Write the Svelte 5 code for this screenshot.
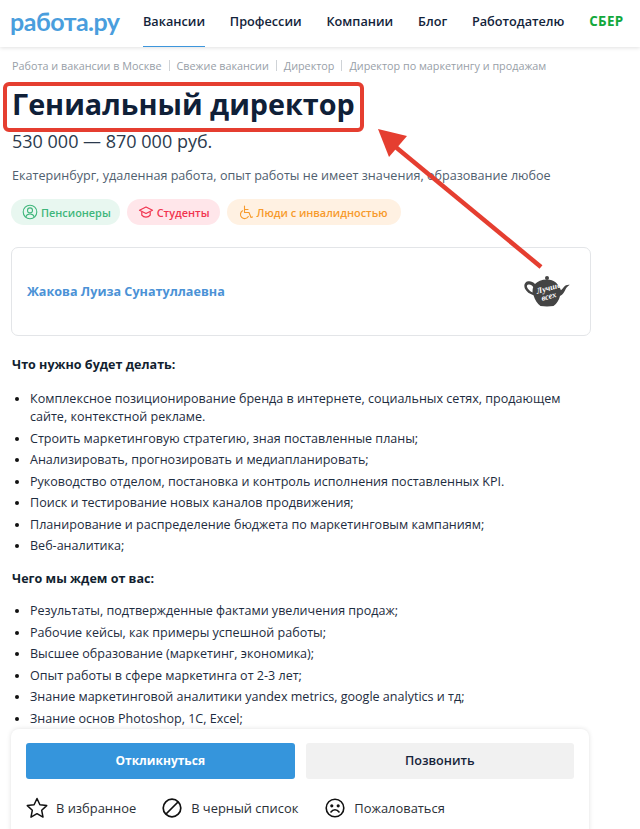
<script>
  const crumbs = ['Работа и вакансии в Москве', 'Свежие вакансии', 'Директор', 'Директор по маркетингу и продажам'];
  const duties = [
    'Комплексное позиционирование бренда в интернете, социальных сетях, продающем сайте, контекстной рекламе.',
    'Строить маркетинговую стратегию, зная поставленные планы;',
    'Анализировать, прогнозировать и медиапланировать;',
    'Руководство отделом, постановка и контроль исполнения поставленных KPI.',
    'Поиск и тестирование новых каналов продвижения;',
    'Планирование и распределение бюджета по маркетинговым кампаниям;',
    'Веб-аналитика;'
  ];
  const reqs = [
    'Результаты, подтвержденные фактами увеличения продаж;',
    'Рабочие кейсы, как примеры успешной работы;',
    'Высшее образование (маркетинг, экономика);',
    'Опыт работы в сфере маркетинга от 2-3 лет;',
    'Знание маркетинговой аналитики yandex metrics, google analytics и тд;',
    'Знание основ Photoshop, 1С, Excel;'
  ];
</script>

<div class="page">
  <header class="top">
    <span class="logo">работа.ру</span>
    <nav class="nav">
      <a class="active">Вакансии</a>
      <a>Профессии</a>
      <a>Компании</a>
      <a>Блог</a>
      <a>Работодателю</a>
      <a class="sber">СБЕР</a>
    </nav>
  </header>

  <main class="content">
    <div class="crumbs">
      {#each crumbs as c, i}
        {#if i > 0}<i class="sep"></i>{/if}<span>{c}</span>
      {/each}
    </div>
    <h1>Гениальный директор</h1>
    <div class="salary">530 000 — 870 000 руб.</div>
    <div class="meta">Екатеринбург, удаленная работа, опыт работы не имеет значения, образование любое</div>

    <div class="tags">
      <span class="tag green">
        <svg width="16" height="16" viewBox="0 0 16 16" fill="none" stroke="currentColor" stroke-width="1.1"><circle cx="8" cy="8" r="6.8"/><circle cx="8" cy="6.4" r="2.5"/><path d="M3.7 13c.6-2 2.3-3 4.3-3s3.700 1 4.300 3"/></svg>
        Пенсионеры
      </span>
      <span class="tag red">
        <svg width="16" height="16" viewBox="0 0 16 16" fill="none" stroke="currentColor" stroke-width="1.2" stroke-linejoin="round"><path d="M8 3 1.500 6.300 8 9.500l6.500-3.200z"/><path d="M3.800 8v3.200c1 1.300 2.500 2 4.200 2s3.200-.7 4.200-2V8"/></svg>
        Студенты
      </span>
      <span class="tag orange">
        <svg width="16" height="16" viewBox="0 0 16 16" fill="none" stroke="currentColor" stroke-width="1.1" stroke-linecap="round" stroke-linejoin="round"><path d="M6.500 2v6.500h4.500l2 5 1.500-.6"/><path d="M6.500 5.500h3.500"/><path d="M4.500 6.800A4.200 4.200 0 1 0 10.300 12.500"/></svg>
        Люди с инвалидностью
      </span>
    </div>

    <section class="company">
      <a class="company-name">Жакова Луиза Сунатуллаевна</a>
      <svg class="teapot" width="46" height="31" viewBox="0 0 46 31">
        <circle cx="23" cy="2" r="2" fill="#444"/>
        <path fill="#444" fill-rule="evenodd" d="M23 3.500c-5.500 0-9.500 1.800-12 4.500C9 5.800 6.500 4.800 4 5.300.5 6 -.5 9.500 1 12.800c1.500 3 4.500 5.200 8.500 6.400 1.300 4.600 3.800 8.500 7 10.800 4 .6 9 .6 13 0 3.500-2.500 5.500-6 6.500-10 3-1.500 4.500-4.500 5.700-7 .9-1.800 2.300-3.200 4-4.300-2.300-.3-4.500.5-5.800 2.300-1 1.300-1.800 2.400-3 3.200C35 8.200 30 3.500 23 3.500zM4.500 8.500c2-.3 3.700 1 4.700 2.500-.6 1.800-.8 3.700-.6 5.500C6 15.300 3.600 13 3 11c-.3-1.300.2-2.300 1.500-2.500z"/>
        <g fill="#fff" font-family="Liberation Serif, serif" font-style="italic" font-weight="700" font-size="8.500" transform="rotate(-16 24 16)">
          <text x="13" y="15">Лучше</text>
          <text x="16" y="23">всех</text>
        </g>
      </svg>
    </section>

    <div class="desc">
      <p class="head">Что нужно будет делать:</p>
      <ul>
        {#each duties as d}<li>{d}</li>{/each}
      </ul>
      <p class="head second">Чего мы ждем от вас:</p>
      <ul class="after-second">
        {#each reqs as r}<li>{r}</li>{/each}
      </ul>
    </div>
  </main>

  <aside class="panel">
    <div class="buttons">
      <button class="btn primary">Откликнуться</button>
      <button class="btn secondary">Позвонить</button>
    </div>
    <div class="actions">
      <span class="action fav">
        <svg width="24" height="24" viewBox="0 0 24 24" fill="none" stroke="#111" stroke-width="1.500" stroke-linejoin="round"><path d="M12 2.500l2.900 6.300 6.800.8-5 4.700 1.300 6.800-6-3.400-6 3.400 1.300-6.800-5-4.700 6.800-.8z"/></svg>
        В избранное
      </span>
      <span class="action block">
        <svg width="20" height="20" viewBox="0 0 20 20" fill="none" stroke="#111" stroke-width="1.700"><circle cx="10" cy="10" r="8.800"/><path d="M4 16 16 4"/></svg>
        В черный список
      </span>
      <span class="action">
        <svg width="20" height="20" viewBox="0 0 20 20" fill="none" stroke="#111" stroke-width="1.600" stroke-linecap="round"><circle cx="10" cy="10" r="8.800"/><circle cx="6.800" cy="7.800" r=".8" fill="#111"/><circle cx="13.200" cy="7.800" r=".8" fill="#111"/><path d="M6 14c1-1.500 2.400-2.200 4-2.200s3 .7 4 2.200"/></svg>
        Пожаловаться
      </span>
    </div>
  </aside>

  <div class="mark"></div>
  <svg class="arrow" width="640" height="829" viewBox="0 0 640 829">
    <path d="M541 267 392 144" stroke="#e53e30" stroke-width="4.500" fill="none"/>
    <path d="M378 129 407 136 389 157z" fill="#e53e30"/>
  </svg>
</div>

<style>
  :global(body) {
    margin: 0;
    background: #fff;
    overflow: hidden;
  }
  .page {
    position: relative;
    width: 640px;
    height: 829px;
    overflow: hidden;
    font-family: "Open Sans", sans-serif;
    color: #0f2038;
  }
  .top {
    display: flex;
    align-items: center;
    height: 47px;
    padding-left: 10px;
    box-sizing: border-box;
    box-shadow: 0 1px 4px rgba(0, 0, 0, 0.12);
  }
  .logo {
    width: 133px;
    flex: none;
    margin-top: -6px;
    font-family: Lato, sans-serif;
    font-weight: 700;
    font-size: 25px;
    line-height: 30px;
    letter-spacing: -0.5px;
    color: #4a9edd;
  }
  .nav {
    display: flex;
    gap: 24.800px;
    height: 100%;
  }
  .nav a {
    display: flex;
    align-items: center;
    height: 100%;
    box-sizing: border-box;
    padding-bottom: 5px;
    font-size: 12.700px;
    font-weight: 600;
    color: #12233a;
  }
  .nav a.active {
    border-bottom: 1px solid #3d96dc;
  }
  .nav a.sber {
    font-weight: 700;
    font-size: 13.400px;
    color: #12a83c;
    letter-spacing: 0.3px;
  }
  .content {
    padding: 0 12px;
  }
  .crumbs {
    display: flex;
    align-items: center;
    height: 16px;
    margin-top: 10px;
    font-size: 10.800px;
    color: #98a0a8;
    white-space: nowrap;
  }
  .sep {
    width: 1px;
    height: 11px;
    margin: 0 7px;
    background: #cfd3d7;
  }
  h1 {
    margin: 12px 0 0;
    font-size: 28.750px;
    line-height: 38px;
    font-weight: 700;
    color: #0f2038;
  }
  .salary {
    margin-top: 5px;
    font-size: 18px;
    line-height: 26px;
    color: #2b3a4d;
  }
  .meta {
    margin-top: 13px;
    font-size: 12.600px;
    line-height: 18px;
    color: #50606f;
    white-space: nowrap;
  }
  .tags {
    display: flex;
    gap: 7px;
    margin: 14px 0 0 -1px;
  }
  .tag {
    display: flex;
    align-items: center;
    gap: 3px;
    height: 26px;
    padding: 0 10px 0 11px;
    border-radius: 13px;
    font-size: 10.900px;
    font-weight: 600;
    white-space: nowrap;
  }
  .green { background: #e8f7f0; color: #3fb67b; padding-right: 9px; }
  .red { background: #ffe6ea; color: #f1344f; }
  .orange { background: #fff1e2; color: #f79a2b; padding-right: 14px; }
  .company {
    display: flex;
    align-items: center;
    justify-content: space-between;
    width: 580px;
    height: 89px;
    box-sizing: border-box;
    margin: 22px 0 0 -1px;
    padding: 0 20px 0 15px;
    border: 1px solid #e3e5e8;
    border-radius: 7px;
  }
  .company-name {
    font-size: 12.600px;
    font-weight: 700;
    color: #4b92d6;
  }
  .teapot {
    margin-top: -1px;
  }
  .desc {
    margin-top: 20px;
    width: 570px;
    font-size: 12.550px;
    line-height: 18px;
    color: #1d2c40;
  }
  .head {
    margin: 0;
    font-weight: 700;
    color: #121f30;
  }
  .second {
    margin-top: 15px;
  }
  ul {
    margin: 16px 0 0;
    padding: 0 0 0 18px;
    list-style: none;
  }
  .after-second {
    margin-top: 14px;
  }
  li {
    margin-bottom: 3.500px;
  }
  li::before {
    content: "";
    display: inline-block;
    width: 4px;
    height: 4px;
    margin-left: -15px;
    margin-right: 11px;
    border-radius: 50%;
    background: #111;
    vertical-align: 2px;
  }
  .panel {
    position: absolute;
    left: 11px;
    top: 729px;
    width: 578px;
    height: 110px;
    box-sizing: border-box;
    padding: 14px 15px 0;
    background: #fff;
    border-radius: 8px;
    box-shadow: 0 0 5px rgba(0, 0, 0, 0.12);
  }
  .buttons {
    display: flex;
    gap: 11px;
  }
  .btn {
    flex: 1;
    height: 36px;
    border: 0;
    border-radius: 3px;
    font-family: inherit;
    font-size: 12px;
    line-height: 16px;
  }
  .primary {
    background: #3595dc;
    color: #fff;
    font-weight: 700;
  }
  .secondary {
    background: #f1f1f1;
    color: #16243a;
    font-weight: 600;
    font-size: 12.600px;
  }
  .actions {
    display: flex;
    align-items: center;
    margin-top: 17px;
    margin-left: -1px;
  }
  .action {
    display: flex;
    align-items: center;
    gap: 9px;
    font-size: 12.900px;
    font-weight: 500;
    line-height: 24px;
    color: #2a2f36;
    white-space: nowrap;
  }
  .fav { margin-right: 26px; gap: 7px; }
  .block { margin-right: 27px; }
  .mark {
    position: absolute;
    left: 3px;
    top: 82px;
    width: 361px;
    height: 50px;
    box-sizing: border-box;
    border: 4px solid #e53e30;
    border-radius: 6px;
  }
  .arrow {
    position: absolute;
    left: 0;
    top: 0;
    pointer-events: none;
  }
</style>
